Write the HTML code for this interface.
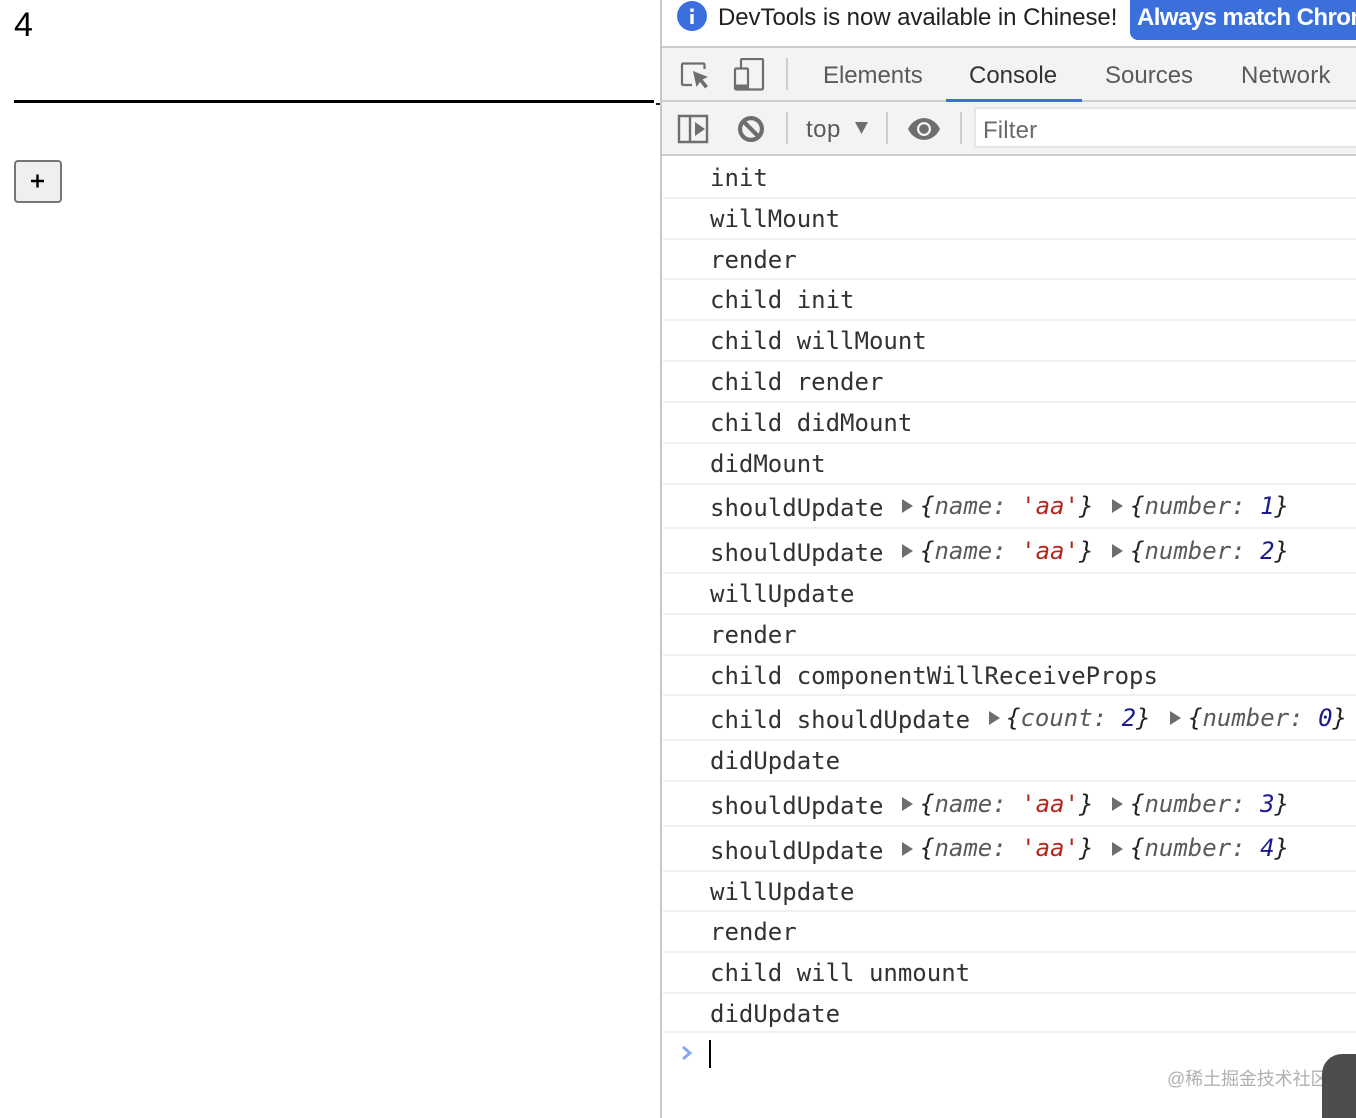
<!DOCTYPE html>
<html><head><meta charset="utf-8">
<style>
*{box-sizing:border-box}
html,body{margin:0;padding:0;width:1356px;height:1118px;overflow:hidden;background:#fff;position:relative}
.a{position:absolute}
.t{position:absolute;font:24px/30px "DejaVu Sans Mono","Liberation Mono",monospace;color:#303336;white-space:pre}
.o{font-style:italic;color:#5a5a5a}
.b{font-style:italic;color:#222}
.s{font-style:italic;color:#b3261e}
.n{font-style:italic;color:#1c1a8f}
.l{position:absolute;left:663px;width:693px;height:2px;background:#f0f0f0}
.g{position:absolute;font:24px/30px "Liberation Sans",Arial,sans-serif;white-space:pre}
.tri{position:absolute;width:0;height:0;border-left:11px solid #6e6e6e;border-top:7px solid transparent;border-bottom:7px solid transparent}
.sep{position:absolute;width:2px;background:#ccc}
</style></head><body>
<!-- left page -->
<div class="g" style="left:14px;top:8px;font-size:34px;line-height:34px;color:#000">4</div>
<div class="a" style="left:14px;top:100px;width:640px;height:3px;background:#000"></div>
<div class="a" style="left:656px;top:103px;width:4px;height:2px;background:#222"></div>
<div class="a" style="left:14px;top:160px;width:48px;height:43px;border:2px solid #767676;border-radius:4px;background:#efefef"></div>
<svg class="a" style="left:30px;top:173px" width="16" height="16"><path d="M1 8H14M7.5 1.500V14.500" stroke="#000" stroke-width="2.400" fill="none"/></svg>

<!-- devtools -->
<div class="a" style="left:660px;top:0;width:2px;height:1118px;background:#c8c8c8"></div>
<div class="a" style="left:662px;top:46px;width:694px;height:108px;background:#f2f3f4"></div>
<div class="a" style="left:662px;top:46px;width:694px;height:2px;background:#cbcbcb"></div>
<div class="a" style="left:662px;top:100px;width:694px;height:2px;background:#cfcfcf"></div>
<div class="a" style="left:662px;top:154px;width:694px;height:2px;background:#cfcfcf"></div>

<svg class="a" style="left:677px;top:1px" width="30" height="30"><circle cx="15" cy="15" r="15" fill="#3b6fde"/><rect x="13.300" y="13" width="3.400" height="10" fill="#fff"/><rect x="13.300" y="7.500" width="3.400" height="3.400" fill="#fff"/></svg>
<div class="g" style="left:718px;top:3px;color:#202124;font-size:24px;letter-spacing:-0.06px">DevTools is now available in Chinese!</div>
<div class="a" style="left:1130px;top:0;width:226px;height:40px;background:#3a6fdc;border-bottom-left-radius:8px;overflow:hidden">
<div class="g" style="left:7px;top:3px;color:#fff;font-weight:bold;font-size:24px;letter-spacing:-0.55px">Always match Chrome</div></div>

<!-- top toolbar icons -->
<svg class="a" style="left:680px;top:58px" width="90" height="34">
<path d="M12 27H3.500Q2 27 2 25.500V7Q2 5.500 3.500 5.500H23Q24.500 5.500 24.500 7V11" fill="none" stroke="#6e6e6e" stroke-width="2.200"/>
<path d="M13 13L28 19L22.500 21.500L28 28L25 30.500L20 24L16.500 29Z" fill="#6e6e6e"/>
<path d="M61 10V2.500Q61 1 62.500 1H81.500Q83 1 83 2.500V30Q83 31.500 81.500 31.500H56.500Q55 31.500 55 30V12Q55 10.500 56.500 10.500H66.500Q68 10.500 68 12V31.500" fill="none" stroke="#6e6e6e" stroke-width="2.200"/>
<rect x="55" y="26.500" width="13" height="5" fill="#6e6e6e"/>
</svg>
<div class="sep" style="left:786px;top:58px;height:32px"></div>
<div class="g" style="left:823px;top:61px;color:#5a5a5a;letter-spacing:-0.05px">Elements</div>
<div class="g" style="left:969px;top:61px;color:#333">Console</div>
<div class="g" style="left:1105px;top:61px;color:#5a5a5a">Sources</div>
<div class="g" style="left:1241px;top:61px;color:#5a5a5a;letter-spacing:0.25px">Network</div>
<div class="a" style="left:946px;top:99px;width:136px;height:3px;background:#3a6fdc"></div>

<!-- console toolbar -->
<svg class="a" style="left:677px;top:114px" width="34" height="30">
<path d="M2 2H30V28H2ZM13 2V28" fill="none" stroke="#6e6e6e" stroke-width="2.400"/>
<path d="M18 8L28 15L18 22Z" fill="#6e6e6e"/></svg>
<svg class="a" style="left:737px;top:115px" width="28" height="28">
<circle cx="14" cy="14" r="10.900" fill="none" stroke="#6e6e6e" stroke-width="4.200"/>
<path d="M6 6L22 22" stroke="#6e6e6e" stroke-width="4.200"/></svg>
<div class="sep" style="left:786px;top:112px;height:32px"></div>
<div class="g" style="left:806px;top:115px;color:#5a5a5a;letter-spacing:0.5px">top</div>
<svg class="a" style="left:854px;top:121px" width="15" height="14"><path d="M1 1H14L7.500 13Z" fill="#6e6e6e"/></svg>
<div class="sep" style="left:886px;top:112px;height:32px"></div>
<svg class="a" style="left:907px;top:116px" width="34" height="26">
<path d="M1 13C8 -1.500 26 -1.500 33 13C26 27.500 8 27.500 1 13Z" fill="#6e6e6e"/>
<circle cx="17" cy="13" r="7" fill="#f2f3f4"/><circle cx="17" cy="13" r="4.800" fill="#6e6e6e"/></svg>
<div class="sep" style="left:960px;top:112px;height:32px"></div>
<div class="a" style="left:974px;top:107px;width:382px;height:41px;background:#fff;border:2px solid #e6e6e6;border-right:0"></div>
<div class="g" style="left:983px;top:116px;color:#6a6a6a;letter-spacing:0.15px">Filter</div>

<!-- console rows -->
<div class="l" style="top:197px"></div><div class="l" style="top:238px"></div><div class="l" style="top:278px"></div>
<div class="l" style="top:319px"></div><div class="l" style="top:360px"></div><div class="l" style="top:401px"></div>
<div class="l" style="top:442px"></div><div class="l" style="top:483px"></div><div class="l" style="top:527px"></div>
<div class="l" style="top:572px"></div><div class="l" style="top:613px"></div><div class="l" style="top:654px"></div>
<div class="l" style="top:694px"></div><div class="l" style="top:739px"></div><div class="l" style="top:780px"></div>
<div class="l" style="top:825px"></div><div class="l" style="top:870px"></div><div class="l" style="top:910px"></div>
<div class="l" style="top:951px"></div><div class="l" style="top:992px"></div><div class="l" style="top:1031px"></div>

<div class="t" style="left:710px;top:163px">init</div>
<div class="t" style="left:710px;top:204px">willMount</div>
<div class="t" style="left:710px;top:245px">render</div>
<div class="t" style="left:710px;top:285px">child init</div>
<div class="t" style="left:710px;top:326px">child willMount</div>
<div class="t" style="left:710px;top:367px">child render</div>
<div class="t" style="left:710px;top:408px">child didMount</div>
<div class="t" style="left:710px;top:449px">didMount</div>

<div class="t" style="left:710px;top:493px">shouldUpdate</div>
<div class="tri" style="left:902px;top:499px"></div>
<div class="t" style="left:920px;top:491px"><span class="b">{</span><span class="o">name:</span> <span class="s">'aa'</span><span class="b">}</span></div>
<div class="tri" style="left:1112px;top:499px"></div>
<div class="t" style="left:1130px;top:491px"><span class="b">{</span><span class="o">number:</span> <span class="n">1</span><span class="b">}</span></div>

<div class="t" style="left:710px;top:538px">shouldUpdate</div>
<div class="tri" style="left:902px;top:544px"></div>
<div class="t" style="left:920px;top:536px"><span class="b">{</span><span class="o">name:</span> <span class="s">'aa'</span><span class="b">}</span></div>
<div class="tri" style="left:1112px;top:544px"></div>
<div class="t" style="left:1130px;top:536px"><span class="b">{</span><span class="o">number:</span> <span class="n">2</span><span class="b">}</span></div>

<div class="t" style="left:710px;top:579px">willUpdate</div>
<div class="t" style="left:710px;top:620px">render</div>
<div class="t" style="left:710px;top:661px">child componentWillReceiveProps</div>

<div class="t" style="left:710px;top:705px">child shouldUpdate</div>
<div class="tri" style="left:989px;top:711px"></div>
<div class="t" style="left:1006px;top:703px"><span class="b">{</span><span class="o">count:</span> <span class="n">2</span><span class="b">}</span></div>
<div class="tri" style="left:1170px;top:711px"></div>
<div class="t" style="left:1188px;top:703px"><span class="b">{</span><span class="o">number:</span> <span class="n">0</span><span class="b">}</span></div>

<div class="t" style="left:710px;top:746px">didUpdate</div>

<div class="t" style="left:710px;top:791px">shouldUpdate</div>
<div class="tri" style="left:902px;top:797px"></div>
<div class="t" style="left:920px;top:789px"><span class="b">{</span><span class="o">name:</span> <span class="s">'aa'</span><span class="b">}</span></div>
<div class="tri" style="left:1112px;top:797px"></div>
<div class="t" style="left:1130px;top:789px"><span class="b">{</span><span class="o">number:</span> <span class="n">3</span><span class="b">}</span></div>

<div class="t" style="left:710px;top:836px">shouldUpdate</div>
<div class="tri" style="left:902px;top:842px"></div>
<div class="t" style="left:920px;top:833px"><span class="b">{</span><span class="o">name:</span> <span class="s">'aa'</span><span class="b">}</span></div>
<div class="tri" style="left:1112px;top:842px"></div>
<div class="t" style="left:1130px;top:833px"><span class="b">{</span><span class="o">number:</span> <span class="n">4</span><span class="b">}</span></div>

<div class="t" style="left:710px;top:877px">willUpdate</div>
<div class="t" style="left:710px;top:917px">render</div>
<div class="t" style="left:710px;top:958px">child will unmount</div>
<div class="t" style="left:710px;top:999px">didUpdate</div>

<svg class="a" style="left:680px;top:1045px" width="14" height="16"><path d="M3 2L10 8L3 14" fill="none" stroke="#88a8ec" stroke-width="3"/></svg>
<div class="a" style="left:709px;top:1040px;width:2px;height:28px;background:#000"></div>

<div class="a" style="left:1167px;top:1069px;font:18px/20px 'Liberation Sans','Noto Sans CJK SC',sans-serif;color:#b0b0b0;white-space:pre;letter-spacing:-0.1px">@稀土掘金技术社区</div>
<div class="a" style="left:1322px;top:1054px;width:34px;height:64px;background:#4d4d4d;border-top-left-radius:20px"></div>
</body></html>
